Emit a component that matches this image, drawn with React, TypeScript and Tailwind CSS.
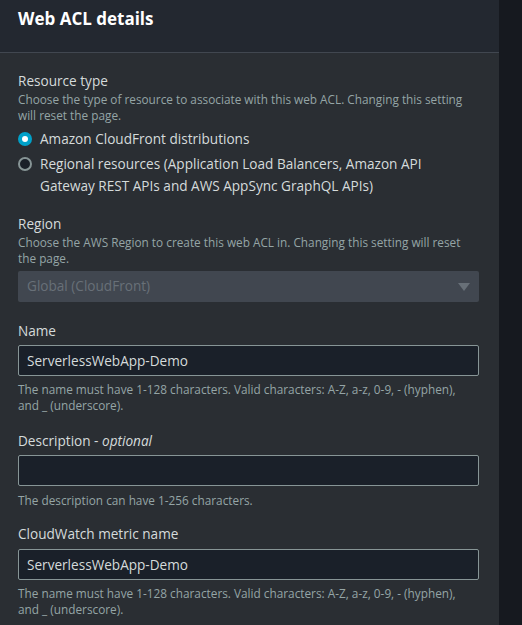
import React, { useState } from 'react';

const font = { fontFamily: '"Open Sans", "Noto Sans", Arial, sans-serif' };

const Help = ({ children }: { children: React.ReactNode }) => (
  <p className="max-w-[450px] text-[11.8px] leading-[16px] text-[#95a5a6]">{children}</p>
);

const Label = ({ children }: { children: React.ReactNode }) => (
  <div className="text-[13.6px] leading-[20px] text-[#d5dbdb]">{children}</div>
);

const Radio = ({ checked, label, onClick }: { checked: boolean; label: string; onClick: () => void }) => (
  <label className="flex items-start gap-[8px] cursor-pointer" onClick={onClick}>
    <span
      className={
        checked
          ? 'mt-[4px] w-[14px] h-[14px] shrink-0 rounded-full bg-[#00a1c9] flex items-center justify-center'
          : 'mt-[4px] w-[14px] h-[14px] shrink-0 rounded-full bg-[#1a2029] border-2 border-[#879596]'
      }
    >
      {checked && <span className="w-[6px] h-[6px] rounded-full bg-white" />}
    </span>
    <span className="max-w-[410px] text-[13.6px] leading-[22px] text-[#d5dbdb]">{label}</span>
  </label>
);

const TextInput = ({ value }: { value: string }) => (
  <input
    defaultValue={value}
    className="w-full h-[31px] px-[8px] bg-[#1a2029] border border-[#879596] rounded-[2px] text-[13.6px] text-[#d5dbdb] outline-none"
    style={font}
  />
);

export default function App() {
  const [type, setType] = useState<'cf' | 'regional'>('cf');

  return (
    <div className="flex w-[522px] h-[625px] overflow-hidden bg-[#16191f]" style={font}>
      <div className="w-[499px] shrink-0 bg-[#2a2e33]">
        <div className="h-[53px] bg-[#232830] border-b border-[#414750] px-[18px] pt-[6px]">
          <h2 className="text-[17px] leading-[26px] font-bold text-white">Web ACL details</h2>
        </div>

        <div className="pl-[18px] pr-[20px] pt-[18px] flex flex-col">
          <div>
            <Label>Resource type</Label>
            <Help>
              Choose the type of resource to associate with this web ACL. Changing this setting will reset the page.
            </Help>
            <div className="mt-[5px] flex flex-col gap-[3px]">
              <Radio checked={type === 'cf'} label="Amazon CloudFront distributions" onClick={() => setType('cf')} />
              <Radio
                checked={type === 'regional'}
                label="Regional resources (Application Load Balancers, Amazon API Gateway REST APIs and AWS AppSync GraphQL APIs)"
                onClick={() => setType('regional')}
              />
            </div>
          </div>

          <div className="mt-[17px]">
            <Label>Region</Label>
            <Help>Choose the AWS Region to create this web ACL in. Changing this setting will reset the page.</Help>
            <div className="mt-[5px] h-[31px] bg-[#414750] rounded-[2px] flex items-center justify-between px-[9px]">
              <span className="text-[13.6px] text-[#687078]">Global (CloudFront)</span>
              <svg width="12" height="10" viewBox="0 0 12 10">
                <path d="M0 1h12L6 9z" fill="#687078" />
              </svg>
            </div>
          </div>

          <div className="mt-[19px]">
            <div className="mb-[4px]"><Label>Name</Label></div>
            <TextInput value="ServerlessWebApp-Demo" />
            <div className="mt-[5px]">
              <Help>The name must have 1-128 characters. Valid characters: A-Z, a-z, 0-9, - (hyphen), and _ (underscore).</Help>
            </div>
          </div>

          <div className="mt-[18px]">
            <div className="mb-[4px]">
              <Label>
                Description - <i>optional</i>
              </Label>
            </div>
            <TextInput value="" />
            <div className="mt-[6px]">
              <Help>The description can have 1-256 characters.</Help>
            </div>
          </div>

          <div className="mt-[16px]">
            <div className="mb-[5px]"><Label>CloudWatch metric name</Label></div>
            <TextInput value="ServerlessWebApp-Demo" />
            <div className="mt-[5px]">
              <Help>The name must have 1-128 characters. Valid characters: A-Z, a-z, 0-9, - (hyphen), and _ (underscore).</Help>
            </div>
          </div>
        </div>
      </div>
    </div>
  );
}
